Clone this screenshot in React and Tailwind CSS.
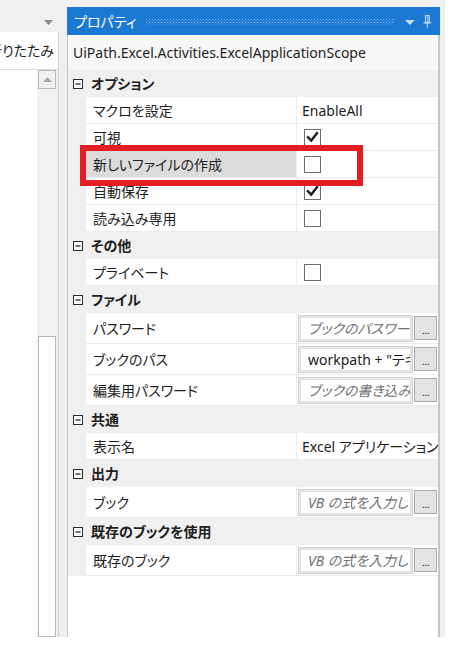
import React from "react";

const FONT = "font-['Noto_Sans','Noto_Sans_CJK_JP',sans-serif] [font-feature-settings:'palt']";

function Check({ checked }) {
  return (
    <svg width="17" height="17" viewBox="0 0 17 17" className="block">
      <rect x="0.5" y="0.5" width="16" height="16" fill="white" stroke="#6e6e6e" />
      {checked && (
        <path d="M4 8.3 L7.2 11.6 L13 4.2" fill="none" stroke="#1f1f1f" strokeWidth="2.4" strokeLinecap="square" />
      )}
    </svg>
  );
}

function Minus() {
  return (
    <svg width="10" height="10" viewBox="0 0 10 10" className="block">
      <rect x="0.5" y="0.5" width="9" height="9" fill="#f7f7f7" stroke="#2a2a2a" />
      <path d="M2.5 5 H7.5" stroke="#1a1a1a" strokeWidth="1.2" />
    </svg>
  );
}

function InputBox({ text, placeholder }) {
  return (
    <div className="flex items-center gap-[1px] h-full pl-[1px] pr-[1px]">
      <div className="w-[115px] h-[27px] border border-[#d2d2d2] bg-[#e9e9e9] p-[1px]">
        <div className="h-full bg-white border border-[#e0e0e0] overflow-hidden whitespace-nowrap flex items-center pl-[7px]">
          {text ? (
            <span className="text-[14px] text-[#1e1e1e]">{text}</span>
          ) : (
            <span className="text-[14px] italic text-[#727272]">{placeholder}</span>
          )}
        </div>
      </div>
      <div className="w-[24px] h-[24px] border border-[#adadad] bg-[#e3e3e3] flex items-end justify-center pb-[3px]">
        <span className="text-[11px] leading-none text-[#222] font-['Liberation_Sans',sans-serif] tracking-[-0.5px]">...</span>
      </div>
    </div>
  );
}

function Row({ item }) {
  const tall = item.type === "input";
  return (
    <div className={`flex ${tall ? "h-[31px]" : "h-[27px]"}`}>
      <div className="w-[18px] bg-[#f0f0f0] shrink-0" />
      <div
        className={`w-[211px] shrink-0 border-b border-r border-[#ececec] flex items-center pl-[7px] text-[14px] text-[#1e1e1e] whitespace-nowrap overflow-hidden ${
          item.highlight ? "bg-[#dcdcdc]" : "bg-white"
        }`}
      >
        {item.name}
      </div>
      <div className="flex-1 min-w-0 bg-white border-b border-[#ececec] overflow-hidden">
        {item.type === "check" && (
          <div className="h-full flex items-center pl-[7px]">
            <Check checked={item.checked} />
          </div>
        )}
        {item.type === "text" && (
          <div className="h-full flex items-center pl-[5px] text-[14px] text-[#1e1e1e] whitespace-nowrap">{item.text}</div>
        )}
        {item.type === "input" && <InputBox text={item.text} placeholder={item.placeholder} />}
      </div>
    </div>
  );
}

function Category({ title }) {
  return (
    <div className="flex h-[27px] bg-[#f0f0f0] items-center">
      <div className="w-[18px] shrink-0 flex items-center pl-[5px]">
        <Minus />
      </div>
      <div className="pl-[5px] text-[14px] font-bold text-[#1e1e1e] whitespace-nowrap">{title}</div>
    </div>
  );
}

const groups = [
  {
    title: "オプション",
    items: [
      { name: "マクロを設定", type: "text", text: "EnableAll" },
      { name: "可視", type: "check", checked: true },
      { name: "新しいファイルの作成", type: "check", checked: false, highlight: true },
      { name: "自動保存", type: "check", checked: true },
      { name: "読み込み専用", type: "check", checked: false },
    ],
  },
  { title: "その他", items: [{ name: "プライベート", type: "check", checked: false }] },
  {
    title: "ファイル",
    items: [
      { name: "パスワード", type: "input", placeholder: "ブックのパスワード" },
      { name: "ブックのパス", type: "input", text: 'workpath + "テキスト.xlsx"' },
      { name: "編集用パスワード", type: "input", placeholder: "ブックの書き込みパスワード" },
    ],
  },
  { title: "共通", items: [{ name: "表示名", type: "text", text: "Excel アプリケーション スコープ" }] },
  { title: "出力", items: [{ name: "ブック", type: "input", placeholder: "VB の式を入力してください" }] },
  {
    title: "既存のブックを使用",
    items: [{ name: "既存のブック", type: "input", placeholder: "VB の式を入力してください" }],
  },
];

export default function App() {
  return (
    <div className={`w-[460px] h-[646px] bg-white relative overflow-hidden ${FONT}`}>
      <div className="flex w-[445px] h-[637px] bg-[#f0f0f0]">
        {/* Left panel */}
        <div className="w-[59px] shrink-0 flex flex-col">
          <div className="h-[32px] flex items-start justify-end pr-[6px] pt-[20px]">
            <svg width="9" height="5" viewBox="0 0 9 5" className="block">
              <path d="M0 0 H9 L4.5 5 Z" fill="#8a8a8a" />
            </svg>
          </div>
          <div className="flex-1 flex flex-col border-r border-[#d4d4d4]">
            <div className="h-[38px] bg-white border-b border-[#dadada] flex items-center overflow-hidden whitespace-nowrap">
              <span className="text-[14px] text-[#1e1e1e] ml-[-12px]">折りたたみ</span>
            </div>
            <div className="flex-1 flex">
              <div className="w-[37px] bg-white" />
              <div className="flex-1 bg-[#f2f2f2] flex flex-col pl-[1px] pr-[2px]">
                <div className="h-[19px] border border-[#b9b9b9] bg-[#f0f0f0] flex items-center justify-center">
                  <svg width="9" height="5" viewBox="0 0 9 5" className="block">
                    <path d="M0 5 H9 L4.5 0 Z" fill="#a6a6a6" />
                  </svg>
                </div>
                <div className="h-[247px]" />
                <div className="flex-1 border border-[#b6b6b6] bg-white" />
              </div>
            </div>
          </div>
        </div>
        <div className="w-[8px] shrink-0" />
        {/* Properties panel */}
        <div className="w-[373px] shrink-0 flex flex-col pt-[7px]">
          <div className="h-[28px] bg-[#1c79d3] flex items-center pl-[7px] pr-[8px]">
            <span className="text-[14px] text-white whitespace-nowrap">プロパティ</span>
            <svg width="255" height="6" className="block ml-[10px] mt-[1px]">
              <defs>
                <pattern id="dots" width="3" height="3" patternUnits="userSpaceOnUse">
                  <rect x="0" y="0" width="1" height="1" fill="#7fb2e8" />
                  <rect x="1.5" y="1.5" width="1" height="1" fill="#5d9ee2" />
                </pattern>
              </defs>
              <rect width="255" height="6" fill="url(#dots)" />
            </svg>
            <svg width="10" height="5" viewBox="0 0 10 5" className="block ml-[10px] mt-[3px]">
              <path d="M0 0 H10 L5 5 Z" fill="#c8ddf3" />
            </svg>
            <svg width="9" height="13" viewBox="0 0 9 13" className="block ml-[9px]">
              <rect x="2.5" y="0.5" width="4" height="7" fill="none" stroke="#d6e6f7" />
              <path d="M5 1 V7" stroke="#d6e6f7" />
              <path d="M0.5 8 H8.5" stroke="#d6e6f7" />
              <path d="M4.5 8 V13" stroke="#d6e6f7" />
            </svg>
          </div>
          <div className="flex-1 flex flex-col border-l border-[#c4c4c4] border-r-2 border-r-[#c6c6c6] bg-white">
            <div className="h-[35px] bg-[#f7f7f7] flex items-center pl-[5px] text-[14px] text-[#1e1e1e] whitespace-nowrap overflow-hidden">
              UiPath.Excel.Activities.ExcelApplicationScope
            </div>
            {groups.map((g) => (
              <div key={g.title} className="flex flex-col">
                <Category title={g.title} />
                {g.items.map((it) => (
                  <Row key={it.name} item={it} />
                ))}
              </div>
            ))}
            <div className="flex-1 bg-white" />
          </div>
        </div>
      </div>
      {/* Red highlight box */}
      <div className="absolute left-[80px] top-[145px] w-[283px] h-[41px] border-[6px] border-[#e41d25]" />
    </div>
  );
}
